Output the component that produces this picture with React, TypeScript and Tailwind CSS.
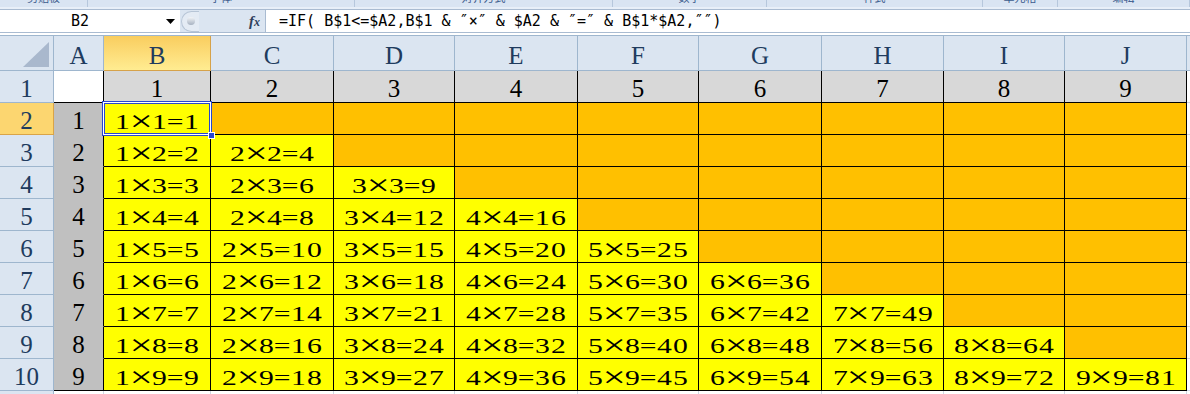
import React from "react";

const COLW = [
  "w-[54px]",
  "w-[50px]",
  "w-[107px]",
  "w-[123px]",
  "w-[121px]",
  "w-[123px]",
  "w-[121px]",
  "w-[123px]",
  "w-[122px]",
  "w-[121px]",
  "w-[122px]",
];
const LETTERS = ["A", "B", "C", "D", "E", "F", "G", "H", "I", "J"];
const NUMS = [1, 2, 3, 4, 5, 6, 7, 8, 9];

const GROUPS = [
  { w: "w-[88px]", label: "剪贴板" },
  { w: "w-[267px]", label: "字体" },
  { w: "w-[258px]", label: "对齐方式" },
  { w: "w-[154px]", label: "数字" },
  { w: "w-[216px]", label: "样式" },
  { w: "w-[75px]", label: "单元格" },
  { w: "w-[132px]", label: "编辑" },
];

const FORMULA = "=IF( B$1<=$A2,B$1 & ″×″ & $A2 & ″=″ & B$1*$A2,″″)";

const RibbonStrip = () => (
  <div className="flex h-[7px] overflow-hidden bg-[#d9e4f2]">
    {GROUPS.map((g) => (
      <div
        key={g.label}
        className={`${g.w} flex shrink-0 justify-center overflow-hidden border-r border-[#b6c7dc]`}
      >
        <span className="-mt-[9px] font-['Noto_Sans_CJK_SC',sans-serif] text-[11px] leading-[12px] text-[#3b5b8d]">
          {g.label}
        </span>
      </div>
    ))}
  </div>
);

const FormulaBar = () => (
  <div className="flex h-[24px] border-y border-[#a9bbd1] bg-[#dbe5f1] font-['DejaVu_Sans_Mono',monospace] text-[15px] text-black">
    <div className="flex w-[180px] bg-white">
      <div className="flex w-[160px] items-center justify-center">B2</div>
      <div className="flex w-[20px] items-center justify-center">
        <svg width="9" height="5" viewBox="0 0 9 5">
          <path d="M0 0h9L4.5 5z" fill="#000" />
        </svg>
      </div>
    </div>
    <div className="flex w-[86px] items-center border-r border-[#a9bbd1]">
      <div className="ml-px flex h-[21px] w-[18px] items-center rounded-l-full border border-r-0 border-[#b7c5d6] bg-[#e4ebf4] pl-[5px]">
        <div className="h-[8px] w-[8px] rounded-full bg-linear-to-b from-[#f3f5f8] to-[#a7b2c1]" />
      </div>
      <span className="mr-[5px] ml-auto font-['Liberation_Serif',serif] text-[15px] font-bold italic text-[#2f3f5b]">
        f<span className="text-[12px]">x</span>
      </span>
    </div>
    <div className="flex flex-1 items-center whitespace-pre bg-white pl-[13px]">
      {FORMULA}
    </div>
  </div>
);

const Product = ({ text }: { text: string }) => (
  <span className="flex items-baseline leading-[24px]">
    {text.split("").map((ch, k) =>
      ch === "×" ? (
        <span key={k} className="w-[21px] text-center">
          <span className="inline-block scale-x-[1.85] scale-y-[1.35]">×</span>
        </span>
      ) : (
        <span key={k} className="w-[16px] text-center">
          <span className="inline-block scale-x-[1.35]">{ch}</span>
        </span>
      )
    )}
  </span>
);

const HeaderRow = () => (
  <div className="flex h-[36px] border-t border-[#9eb6ce] bg-[#dbe5f1] font-['Liberation_Serif',serif] text-[25px] leading-[28px] text-[#203b5e]">
    <div className="h-full w-[54px] shrink-0 border-r border-b border-[#9eb6ce]">
      <svg width="53" height="34" viewBox="0 0 53 34">
        <path d="M49 6V31H23z" fill="#a9b8cd" />
      </svg>
    </div>
    {LETTERS.map((l, k) =>
      l === "B" ? (
        <div
          key={l}
          className={`${COLW[k + 1]} flex h-full shrink-0 items-end justify-center border-r border-b border-[#d6a24a] bg-linear-to-b from-[#f9cd5e] to-[#ffec91]`}
        >
          {l}
        </div>
      ) : (
        <div
          key={l}
          className={`${COLW[k + 1]} flex h-full shrink-0 items-end justify-center border-r border-b border-[#9eb6ce]`}
        >
          {l}
        </div>
      )
    )}
    <div className="h-full flex-1 border-b border-[#9eb6ce]" />
  </div>
);

const RowHeader = ({ n, active }: { n: number; active?: boolean }) => (
  <div
    className={`flex h-full w-[54px] shrink-0 items-end justify-center border-r border-b text-[25px] leading-[26px] text-[#203b5e] ${
      active ? "border-[#d9a448] bg-[#fcd670]" : "border-[#9eb6ce] bg-[#dbe5f1]"
    }`}
  >
    {n}
  </div>
);

const Row1 = () => (
  <div className="flex h-[32px] font-['Liberation_Serif',serif]">
    <RowHeader n={1} />
    <div className="h-full w-[50px] shrink-0 border-r border-b border-black bg-white" />
    {NUMS.map((v, k) => (
      <div
        key={v}
        className={`${COLW[k + 2]} flex h-full shrink-0 items-end justify-center border-r border-b border-black bg-[#d8d8d8] text-[25px] leading-[26px] text-black`}
      >
        {v}
      </div>
    ))}
    <div className="h-full flex-1 border-b border-[#d0d7e5] bg-white" />
  </div>
);

const DataRow = ({ i }: { i: number }) => (
  <div className="flex h-[32px] font-['Liberation_Serif',serif] text-black">
    <RowHeader n={i + 1} active={i === 1} />
    <div
      className={`flex h-full w-[50px] shrink-0 items-end justify-center border-r bg-[#c0c0c0] text-[25px] leading-[26px] ${
        i === 9 ? "border-b border-r-black border-b-black" : "border-b border-r-black border-b-[#c0c0c0]"
      }`}
    >
      {i}
    </div>
    {NUMS.map((j, k) => {
      const filled = j <= i;
      const selected = i === 1 && j === 1;
      return (
        <div
          key={j}
          className={`${COLW[k + 2]} relative flex h-full shrink-0 items-end justify-center border-r border-b border-black text-[22px] ${
            filled ? "bg-[#ffff00]" : "bg-[#ffc000]"
          }`}
        >
          {filled && <Product text={`${j}×${i}=${j * i}`} />}
          {selected && (
            <div className="absolute -top-[2px] -right-[2px] -bottom-[2px] -left-[2px] z-10 border border-[#2846cf] shadow-[inset_0_0_0_1px_#ffffff,inset_0_0_0_2px_#2846cf]">
              <div className="absolute -right-[4px] -bottom-[4px] h-[7px] w-[7px] border border-white bg-[#2846cf]" />
            </div>
          )}
        </div>
      );
    })}
    <div className="h-full flex-1 border-b border-[#d0d7e5] bg-white" />
  </div>
);

const EmptyRow = () => (
  <div className="flex h-[32px]">
    <div className="h-full w-[54px] shrink-0 border-r border-[#9eb6ce] bg-[#dbe5f1]" />
    {COLW.slice(1).map((w, k) => (
      <div key={k} className={`${w} h-full shrink-0 border-r border-[#d0d7e5] bg-white`} />
    ))}
    <div className="h-full flex-1 bg-white" />
  </div>
);

export default function App() {
  return (
    <div className="h-[394px] w-[1190px] overflow-hidden bg-white">
      <RibbonStrip />
      <div className="h-[2px] bg-[#e8eff8]" />
      <FormulaBar />
      <div className="h-[2px] bg-white" />
      <HeaderRow />
      <Row1 />
      {NUMS.map((i) => (
        <DataRow key={i} i={i} />
      ))}
      <EmptyRow />
    </div>
  );
}
